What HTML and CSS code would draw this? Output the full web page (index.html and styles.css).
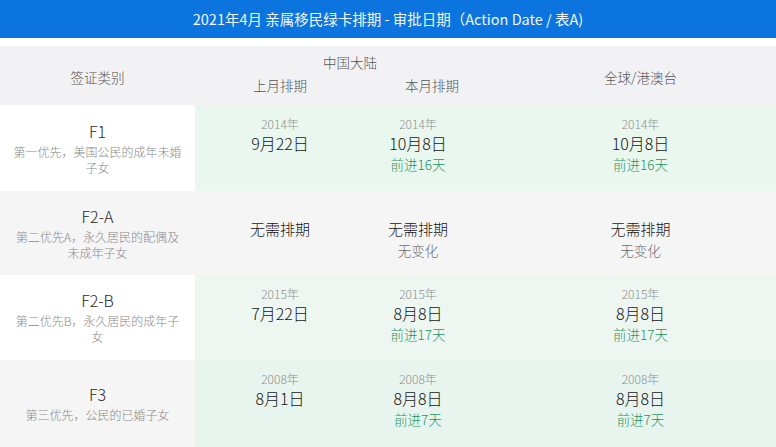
FILE: index.html
```html
<!DOCTYPE html>
<html lang="zh">
<head>
<meta charset="utf-8">
<link rel="stylesheet" href="styles.css">
</head>
<body>
<div class="page">
  <div class="title">2021年4月 亲属移民绿卡排期 - 审批日期（Action Date / 表A)</div>
  <div class="gap"></div>
  <div class="table">
    <div class="row head">
      <div class="cell c1 hcat">签证类别</div>
      <div class="cn">
        <div class="cn-title">中国大陆</div>
        <div class="cn-sub">
          <div class="c2 hsub">上月排期</div>
          <div class="c3 hsub">本月排期</div>
        </div>
      </div>
      <div class="cell c4 hglobal">全球/港澳台</div>
    </div>

    <div class="row r1">
      <div class="cell c1 cat white">
        <div class="code">F1</div>
        <div class="desc">第一优先，美国公民的成年未婚子女</div>
      </div>
      <div class="cell c2 data green1"><div class="yr">2014年</div><div class="dt">9月22日</div></div>
      <div class="cell c3 data green1"><div class="yr">2014年</div><div class="dt">10月8日</div><div class="adv">前进16天</div></div>
      <div class="cell c4 data green1"><div class="yr">2014年</div><div class="dt">10月8日</div><div class="adv">前进16天</div></div>
    </div>

    <div class="row r2">
      <div class="cell c1 cat grey">
        <div class="code">F2-A</div>
        <div class="desc">第二优先A，永久居民的配偶及未成年子女</div>
      </div>
      <div class="cell c2 data grey"><div class="yr"></div><div class="dt">无需排期</div></div>
      <div class="cell c3 data grey"><div class="yr"></div><div class="dt">无需排期</div><div class="nc">无变化</div></div>
      <div class="cell c4 data grey"><div class="yr"></div><div class="dt">无需排期</div><div class="nc">无变化</div></div>
    </div>

    <div class="row r3">
      <div class="cell c1 cat white">
        <div class="code">F2-B</div>
        <div class="desc">第二优先B，永久居民的成年子女</div>
      </div>
      <div class="cell c2 data green2"><div class="yr">2015年</div><div class="dt">7月22日</div></div>
      <div class="cell c3 data green2"><div class="yr">2015年</div><div class="dt">8月8日</div><div class="adv">前进17天</div></div>
      <div class="cell c4 data green2"><div class="yr">2015年</div><div class="dt">8月8日</div><div class="adv">前进17天</div></div>
    </div>

    <div class="row r4">
      <div class="cell c1 cat grey">
        <div class="code">F3</div>
        <div class="desc">第三优先，公民的已婚子女</div>
      </div>
      <div class="cell c2 data green3"><div class="yr">2008年</div><div class="dt">8月1日</div></div>
      <div class="cell c3 data green3"><div class="yr">2008年</div><div class="dt">8月8日</div><div class="adv">前进7天</div></div>
      <div class="cell c4 data green3"><div class="yr">2008年</div><div class="dt">8月8日</div><div class="adv">前进7天</div></div>
    </div>
  </div>
</div>
</body>
</html>
```

FILE: styles.css
```css
html, body {
  margin: 0;
  padding: 0;
  overflow: hidden;
  background: #ffffff;
}
body {
  font-family: "Noto Sans CJK SC", "Noto Sans", sans-serif;
  font-weight: 300;
  width: 776px;
}
.page {
  width: 810px;
}
.title {
  height: 38px;
  width: 776px;
  background: #0b74df;
  color: #eef6ff;
  font-size: 14.5px;
  font-weight: 400;
  line-height: 38px;
  text-align: center;
}
.gap {
  height: 8px;
}
.row {
  display: flex;
}
.cell {
  box-sizing: border-box;
}
.c1 { width: 195px; flex: none; }
.c2 { width: 170px; flex: none; }
.c3 { width: 106px; flex: none; }
.c4 { width: 339px; flex: none; }

.head {
  height: 59px;
  background: #f2f2f4;
  color: #555;
  font-size: 13.5px;
}
.hcat, .hglobal {
  display: flex;
  align-items: center;
  justify-content: center;
  padding-top: 2px;
}
.cn {
  width: 276px;
  flex: none;
  display: flex;
  flex-direction: column;
}
.cn-title {
  text-align: center;
  padding-left: 34px;
  padding-top: 7px;
  line-height: 19px;
}
.cn-sub {
  display: flex;
  line-height: 19px;
  padding-top: 4px;
}
.hsub {
  text-align: center;
}
.c2.hsub { padding-right: 6px; }
.c3.hsub { padding-left: 8px; }

.r1 { height: 86px; }
.r2 { height: 84px; }
.r3 { height: 85px; }
.r4 { height: 87px; }

.white { background: #ffffff; }
.grey { background: #f5f5f5; }
.green1 { background: #e9f7ee; }
.green2 { background: #edf6f1; }
.green3 { background: #e8f4ee; }

.cat {
  display: flex;
  flex-direction: column;
  align-items: center;
  justify-content: center;
  text-align: center;
  padding: 0 12px;
}
.code {
  font-family: "Noto Sans CJK SC", "Noto Sans", sans-serif;
  font-size: 16px;
  color: #2a2a2a;
  line-height: 20px;
  padding-bottom: 3px;
}
.desc {
  font-size: 12px;
  color: #8a8a8a;
  line-height: 16px;
  width: 170px;
}

.data {
  text-align: center;
  padding-top: 10px;
}
.yr {
  height: 18px;
  line-height: 18px;
  font-size: 12px;
  color: #8e8e8e;
}
.dt {
  height: 20px;
  line-height: 20px;
  font-size: 16px;
  color: #161616;
}
.r2 .dt {
  font-size: 15px;
}
.adv {
  line-height: 22px;
  font-size: 13.5px;
  color: #1f9463;
}
.nc {
  line-height: 22px;
  font-size: 13.5px;
  color: #6c6c6c;
}
```
